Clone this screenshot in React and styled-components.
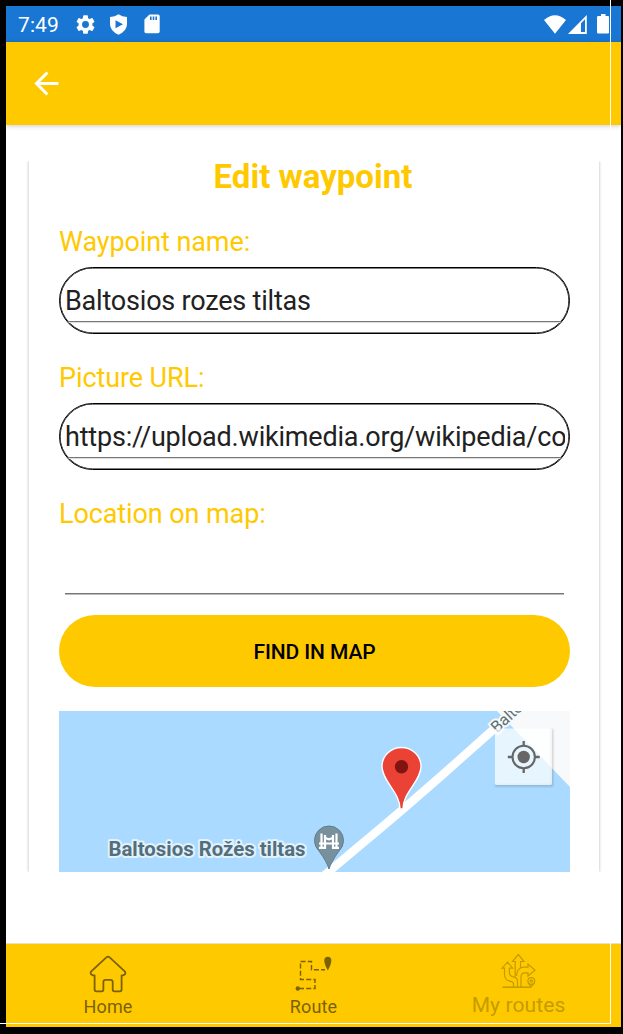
import React from "react";
import styled, { createGlobalStyle } from "styled-components";

const YELLOW = "#ffc900";

const GlobalStyle = createGlobalStyle`
  *, *::before, *::after { box-sizing: border-box; }
  body { margin: 0; background: #000; font-family: Roboto, "Liberation Sans", sans-serif; }
`;

const Frame = styled.div`
  position: relative;
  width: 623px;
  height: 1034px;
  padding: 6px 2px 7px 6px;
  background: #000;
  overflow: hidden;
`;

const Screen = styled.div`
  display: flex;
  flex-direction: column;
  height: 1021px;
  background: #fff;
`;

const DisplayEdge = styled.div`
  position: absolute;
  top: 0;
  left: 0;
  width: 611px;
  height: 1024px;
  border-right: 1px solid #fff;
  border-bottom: 1px solid #fff;
  pointer-events: none;
`;

const StatusBar = styled.header`
  display: flex;
  align-items: center;
  flex: none;
  height: 36px;
  padding: 0 12px 0 12px;
  background: #1976d2;
  color: #fff;
`;

const Clock = styled.time`
  width: 56px;
  font-size: 21px;
  line-height: 36px;
  letter-spacing: 0.1px;
  padding-top: 1px;
`;

const StatusIcons = styled.div`
  display: flex;
  align-items: center;
  margin-left: ${(p) => (p.$end ? "auto" : 0)};
  svg { display: block; fill: #fff; }
  svg:nth-child(2) { margin-left: ${(p) => (p.$end ? 2 : 12)}px; }
  svg:nth-child(3) { margin-left: ${(p) => (p.$end ? 10 : 16)}px; }
`;

const AppBar = styled.div`
  position: relative;
  display: flex;
  align-items: center;
  flex: none;
  height: 83px;
  padding-left: 28px;
  background: ${YELLOW};
  box-shadow: 0 1px 5px rgba(0, 0, 0, 0.2);
`;

const BackButton = styled.button`
  padding: 0;
  border: 0;
  background: none;
  svg { display: block; }
`;

const Content = styled.main`
  flex: 1;
  min-height: 0;
  padding: 36px 22px 72px 23px;
`;

const Card = styled.section`
  height: 711px;
  padding: 0 29px 0 30px;
  background: #fff;
  box-shadow: 0 0 3px rgba(0, 0, 0, 0.3);
  clip-path: inset(0 -6px);
`;

const Title = styled.h1`
  margin: 0;
  height: 63px;
  padding-right: 3px;
  font-size: 33px;
  line-height: 31px;
  font-weight: 700;
  text-align: center;
  color: ${YELLOW};
`;

const Field = styled.div`
  display: flex;
  flex-direction: column;
  height: ${(p) => p.$height}px;
`;

const Label = styled.label`
  height: 43px;
  font-size: 27px;
  line-height: 36px;
  letter-spacing: -0.1px;
  color: ${YELLOW};
`;

const InputShell = styled.div`
  height: 67px;
  padding: 0 4px;
  border: ${(p) => (p.$plain ? "0" : "1.6px solid #000")};
  border-radius: ${(p) => (p.$plain ? 0 : 34)}px;
  box-shadow: ${(p) => (p.$plain ? "none" : "inset 0 0 0 0.6px #000")};
  overflow: hidden;
`;

const Input = styled.div`
  height: ${(p) => (p.$plain ? 55 : 54)}px;
  margin: ${(p) => (p.$plain ? "0 2px" : "0 0 0 1px")};
  border-bottom: 1px solid #777;
  box-shadow: 0 1px 0 ${(p) => (p.$plain ? "#bbb" : "#ddd")};
  color: #212121;
  font-size: 27px;
  line-height: 67px;
  letter-spacing: -0.2px;
  white-space: nowrap;
  overflow: hidden;
`;

const FindButton = styled.button`
  display: block;
  width: 100%;
  height: 72px;
  padding: 1px 0 0;
  border: 0;
  border-radius: 36px;
  background: ${YELLOW};
  color: #000;
  font: 500 21px Roboto, sans-serif;
  letter-spacing: -0.12px;
`;

const MapView = styled.div`
  height: 161px;
  margin-top: 24px;
  svg { display: block; }
`;

const NavBar = styled.nav`
  display: grid;
  grid-template-columns: repeat(3, 1fr);
  flex: none;
  height: 84px;
  background: ${YELLOW};
  border-top: 1px solid #e8dfc4;
`;

const NavItem = styled.div`
  display: flex;
  flex-direction: column;
  align-items: center;
  padding-top: ${(p) => (p.$large ? 8 : 11)}px;
  padding-right: ${(p) => (p.$first ? 1 : 0)}px;
  font-size: ${(p) => (p.$large ? 21 : 18)}px;
  line-height: 26px;
  letter-spacing: ${(p) => (p.$large ? 0.1 : 0.2)}px;
  color: ${(p) => (p.$large ? "#c49b02" : "#7a6106")};
  svg { display: block; margin-bottom: ${(p) => (p.$large ? 2 : 1)}px; }
`;

function GearIcon() {
  return (
    <svg width="23" height="23" viewBox="0 0 24 24">
      <path d="M19.14 12.94c.04-.3.06-.61.06-.94s-.02-.64-.07-.94l2.03-1.58a.5.5 0 0 0 .12-.61l-1.92-3.32a.5.5 0 0 0-.59-.22l-2.39.96a7 7 0 0 0-1.62-.94L14.4 2.81a.5.5 0 0 0-.48-.41h-3.84a.5.5 0 0 0-.47.41l-.36 2.54c-.59.24-1.13.57-1.62.94l-2.39-.96a.5.5 0 0 0-.59.22L2.74 8.87a.5.5 0 0 0 .12.61l2.03 1.58c-.05.3-.09.63-.09.94s.02.64.07.94l-2.03 1.58a.5.5 0 0 0-.12.61l1.92 3.32c.12.22.37.29.59.22l2.39-.96c.5.38 1.03.7 1.62.94l.36 2.54c.05.24.24.41.48.41h3.84c.24 0 .44-.17.47-.41l.36-2.54c.59-.24 1.13-.56 1.62-.94l2.39.96c.22.08.47 0 .59-.22l1.92-3.32a.5.5 0 0 0-.12-.61zM12 15.6A3.6 3.6 0 1 1 12 8.4a3.6 3.6 0 0 1 0 7.2z" />
    </svg>
  );
}

function ShieldPlayIcon() {
  return (
    <svg width="19" height="21" viewBox="0 0 19 21">
      <path fillRule="evenodd" d="M9.5.3 Q13 2.8 18 3 V10 Q18 17 9.5 20.7 Q1 17 1 10 V3 Q6 2.8 9.5.3Z M6.5 6.2 V14.2 L14 10.2Z" />
    </svg>
  );
}

function SdCardIcon() {
  return (
    <svg width="16" height="20" viewBox="0 0 16 20">
      <path fillRule="evenodd" d="M5.5.5H14Q15.7.5 15.7 2.2V17.5Q15.7 19.2 14 19.2H2Q.4 19.2.4 17.5V5.6Z M6 2.5V6H7.6V2.5Z M8.7 2.5V6H10.3V2.5Z M11.4 2.5V6H13V2.5Z" />
    </svg>
  );
}

function WifiIcon() {
  return (
    <svg width="22" height="19" viewBox="0 0 22 19">
      <path d="M0 5Q11-4.5 22 5L11 18.7Z" />
    </svg>
  );
}

function SignalIcon() {
  return (
    <svg width="19" height="19" viewBox="0 0 19 19">
      <path fillRule="evenodd" d="M18.8 0V19H0Z M13 8.3V17H17V4.3Z" />
    </svg>
  );
}

function BatteryIcon() {
  return (
    <svg width="12" height="20" viewBox="0 0 12 20">
      <path d="M4 0H8.5V2H11Q12 2 12 3V18.6Q12 19.6 11 19.6H1.3Q0 19.6 0 18.3V3.3Q0 2 1.3 2H4Z" />
    </svg>
  );
}

function ArrowLeftIcon() {
  return (
    <svg width="25" height="25" viewBox="0 0 25 25" fill="none" stroke="#fff" strokeWidth="3">
      <path d="M24.5 12.5H3M13.4 1.5L2.5 12.5L13.4 23.5" />
    </svg>
  );
}

function HomeIcon() {
  return (
    <svg width="38" height="38" viewBox="0 0 38 38" fill="none" stroke="#7a6106" strokeWidth="1.8" strokeLinejoin="round">
      <path d="M17.6 2.2Q19 1 20.4 2.2L36 16.6Q37.3 19.6 34 20.3H32.6V34.5Q32.6 36.3 31 36.3H25.5Q23.7 36.3 23.7 34.5V27Q23.7 24.8 21.5 24.8H16.6Q14.4 24.8 14.4 27V34.5Q14.4 36.3 12.6 36.3H7.3Q5.6 36.3 5.6 34.5V20.3H4Q.8 19.6 2 16.6Z" />
    </svg>
  );
}

function RouteIcon() {
  return (
    <svg width="38" height="38" viewBox="0 0 38 38">
      <path d="M4 33.5H20V24.5H5.5V6.5H16.5V14.8H30" fill="none" stroke="#7a6106" strokeWidth="1.4" strokeDasharray="5 2.2" />
      <circle cx="2.8" cy="33.5" r="2.2" fill="#7a6106" />
      <path d="M32.8 15.6Q29.3 9 29.3 5.5A3.5 3.7 0 0 1 36.3 5.5Q36.3 9 32.8 15.6Z" fill="#7a6106" />
    </svg>
  );
}

function RoutesIcon() {
  return (
    <svg width="38" height="38" viewBox="0 0 38 38" fill="none" stroke="#c49b02" strokeWidth="1.2">
      <path d="M2.5 35.2H31" strokeWidth="1.5" />
      <path d="M17.5 35V28.5Q17 25.5 12.5 24.7Q9.4 23.8 9.4 20.5V16.2H12.7L7.6 10.2L2 16.2H4.5V22Q4.5 28.5 10 29.2Q13.5 29.8 13.5 32V35" />
      <path d="M15.2 24.8V9.5H12.5L18.3 2.5L24 9.5H20.5V15.8" />
      <path d="M16.8 24V21.5Q18 15.2 24.5 15.2H28V12L35 18.2L28 24V20.8H25Q21 20.8 21 25V35" />
      <circle cx="31.3" cy="29" r="3.4" />
      <circle cx="31.3" cy="29" r="1.2" />
      <path d="M28.2 30.8L31.3 34.8L34.4 30.8" />
    </svg>
  );
}

function WaypointMap() {
  return (
    <svg width="511" height="161" viewBox="59 711 511 161" fontFamily="Roboto, sans-serif">
      <defs>
        <filter id="controlShadow" x="-20%" y="-20%" width="140%" height="140%">
          <feGaussianBlur stdDeviation="1" />
        </filter>
      </defs>
      <rect x="59" y="711" width="511" height="161" fill="#aadaff" />
      <path d="M497 711H570V787Z" fill="#f8f9fb" />
      <path d="M320 879L350 853.8L382 827L402 810L440 777L494 729L518 707" fill="none" stroke="#fff" strokeWidth="8.4" />
      <text x="0" y="0" transform="translate(497 733.5) rotate(-43)" fontSize="16" fill="#5c6f74" stroke="#f8f9fb" strokeWidth="4" paintOrder="stroke">Balto</text>
      <text x="108.5" y="856" fontSize="20.5" fontWeight="700" fill="#546e7a" stroke="#e1f2ff" strokeWidth="4" strokeLinejoin="round" paintOrder="stroke" textLength="197" lengthAdjust="spacingAndGlyphs">Baltosios Rožės tiltas</text>
      <path d="M329 869Q327 862 319 851A14.5 14.5 0 1 1 339 851Q331 862 329 869Z" fill="#78909c" stroke="#607d8b" strokeWidth="1" />
      <path d="M321.5 833.5V849M325 835V849M333 835V849M336.5 833.5V849M319 847.8H326M332 847.8H339" stroke="#fff" strokeWidth="2.2" fill="none" />
      <path d="M319 843.5H339M325 837.5Q329 841 333 837.5" stroke="#fff" strokeWidth="2.2" fill="none" />
      <path d="M400 809C400 792 382 781 382 766.5A19.5 19 0 0 1 421 766.5C421 781 403 792 403 809Z" fill="#ea4335" stroke="#fff" strokeWidth="1.4" />
      <circle cx="401.5" cy="766.8" r="6.7" fill="#811411" />
      <path d="M495 785.4H552V729" fill="none" stroke="#000" strokeOpacity="0.28" strokeWidth="1.5" filter="url(#controlShadow)" />
      <rect x="495" y="728.5" width="57" height="56.5" rx="1.5" fill="#fff" fillOpacity="0.72" />
      <circle cx="523.7" cy="757" r="11.2" fill="none" stroke="#666" strokeWidth="2.1" />
      <circle cx="523.7" cy="757" r="6.2" fill="#666" />
      <path d="M523.7 741V746M523.7 768V773M507.8 757H513M534.5 757H539.7" stroke="#666" strokeWidth="2.3" />
    </svg>
  );
}

export default function App() {
  return (
    <>
      <GlobalStyle />
      <Frame>
        <Screen>
          <StatusBar>
            <Clock>7:49</Clock>
            <StatusIcons>
              <GearIcon />
              <ShieldPlayIcon />
              <SdCardIcon />
            </StatusIcons>
            <StatusIcons $end>
              <WifiIcon />
              <SignalIcon />
              <BatteryIcon />
            </StatusIcons>
          </StatusBar>
          <AppBar>
            <BackButton aria-label="Back">
              <ArrowLeftIcon />
            </BackButton>
          </AppBar>
          <Content>
            <Card>
              <Title>Edit waypoint</Title>
              <Field $height={136}>
                <Label>Waypoint name:</Label>
                <InputShell>
                  <Input>Baltosios rozes tiltas</Input>
                </InputShell>
              </Field>
              <Field $height={136}>
                <Label>Picture URL:</Label>
                <InputShell>
                  <Input>https://upload.wikimedia.org/wikipedia/co</Input>
                </InputShell>
              </Field>
              <Field $height={119}>
                <Label>Location on map:</Label>
                <InputShell $plain>
                  <Input $plain />
                </InputShell>
              </Field>
              <FindButton>FIND IN MAP</FindButton>
              <MapView>
                <WaypointMap />
              </MapView>
            </Card>
          </Content>
          <NavBar>
            <NavItem $first>
              <HomeIcon />
              Home
            </NavItem>
            <NavItem>
              <RouteIcon />
              Route
            </NavItem>
            <NavItem $large>
              <RoutesIcon />
              My routes
            </NavItem>
          </NavBar>
        </Screen>
        <DisplayEdge />
      </Frame>
    </>
  );
}
